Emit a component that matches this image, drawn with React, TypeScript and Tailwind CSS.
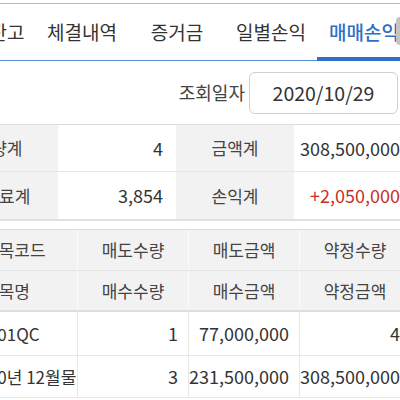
const font = { fontFamily: '"Noto Sans CJK KR", "Noto Sans", sans-serif' };

const tabs = [
  { label: "잔고", w: "w-[56px]" },
  { label: "체결내역", w: "w-[94px]" },
  { label: "증거금", w: "w-[96px]" },
  { label: "일별손익", w: "w-[92px]" },
  { label: "매매손익", w: "w-[94px]", active: true },
];

const summary = [
  ["수량계", "4", "금액계", "308,500,000", false],
  ["수수료계", "3,854", "손익계", "+2,050,000", true],
] as const;

const heads = [
  ["종목코드", "매도수량", "매도금액", "약정수량"],
  ["종목명", "매수수량", "매수금액", "약정금액"],
];

const rows = [
  ["10101QC", "1", "77,000,000", "4"],
  ["2020년 12월물", "3", "231,500,000", "308,500,000"],
];

export default function App() {
  return (
    <div
      className="relative w-[400px] h-[400px] overflow-hidden bg-white text-[#333]"
      style={font}
    >
      <div className="h-[3px]" />
      <div className="border-t border-[#b8b8b8]">
        <div className="flex h-[57px] w-[440px] -ml-[21px] border-b border-[#5a8fd4]">
          {tabs.map((t) => (
            <div
              key={t.label}
              className={`${t.w} shrink-0 relative flex items-center justify-center text-[19px] ${
                t.active ? "text-[#2f6fc4] font-medium" : "text-[#333]"
              }`}
            >
              {t.label}
              {t.active && (
                <span className="absolute left-0 right-0 -bottom-px h-[4px] bg-[#2f6fc4]" />
              )}
            </div>
          ))}
        </div>
      </div>
      <div className="absolute right-0 top-[17px] w-[4px] h-[28px] rounded-l bg-[#c4c4c4]" />

      <div className="flex h-[64px] items-center justify-end pr-[2px] border-b border-[#dcdcdc]">
        <span className="text-[18px] text-[#444] mr-[4px]">조회일자</span>
        <div className="w-[149px] h-[42px] rounded-[6px] border border-[#cfcfcf] flex items-center justify-center text-[19.5px] text-[#333]">
          2020/10/29
        </div>
      </div>

      <div className="-ml-[60px] w-[472px] border-b-2 border-[#e0e0e0]">
        {summary.map(([l1, v1, l2, v2, red], i) => (
          <div
            key={l1}
            className={`grid grid-cols-[118px_118px_118px_118px] h-[47px] ${
              i === 0 ? "border-b border-[#e6e6e6]" : ""
            }`}
          >
            <div className="bg-[#f2f2f2] flex items-center justify-center text-[17px] text-[#444]">{l1}</div>
            <div className="flex items-center justify-end pr-[13px] text-[18px]">{v1}</div>
            <div className="bg-[#f2f2f2] flex items-center justify-center text-[17px] text-[#444]">{l2}</div>
            <div
              className={`flex items-center justify-end pr-[12px] text-[18px] ${
                red ? "text-[#c9302c]" : ""
              }`}
            >
              {v2}
            </div>
          </div>
        ))}
      </div>

      <div className="mt-[8px] -ml-[34px] w-[444px] border-t border-[#dcdcdc]">
        {heads.map((h, i) => (
          <div
            key={h[0]}
            className={`grid grid-cols-[111px_111px_111px_111px] bg-[#f2f2f2] text-[17px] text-[#444] ${
              i === 0 ? "h-[41px] border-b border-[#e4e4e4]" : "h-[41px] border-b-2 border-[#dedede]"
            }`}
          >
            {h.map((c, j) => (
              <div
                key={c}
                className={`flex items-center ${
                  j === 0 ? "justify-start pl-[17px]" : "justify-center border-l border-[#fafafa]"
                }`}
              >
                {c}
              </div>
            ))}
          </div>
        ))}
        {rows.map((r, i) => (
          <div
            key={r[0]}
            className={`grid grid-cols-[111px_111px_111px_111px] border-b border-[#e8e8e8] ${
              i === 0 ? "h-[44px]" : "h-[42px]"
            }`}
          >
            {r.map((c, j) => (
              <div
                key={j}
                className={`flex items-center whitespace-nowrap ${
                  j === 0
                    ? "justify-start pl-[3px] text-[17px]"
                    : "justify-end pr-[10px] text-[18px] border-l border-[#e8e8e8]"
                }`}
              >
                {c}
              </div>
            ))}
          </div>
        ))}
      </div>
    </div>
  );
}
